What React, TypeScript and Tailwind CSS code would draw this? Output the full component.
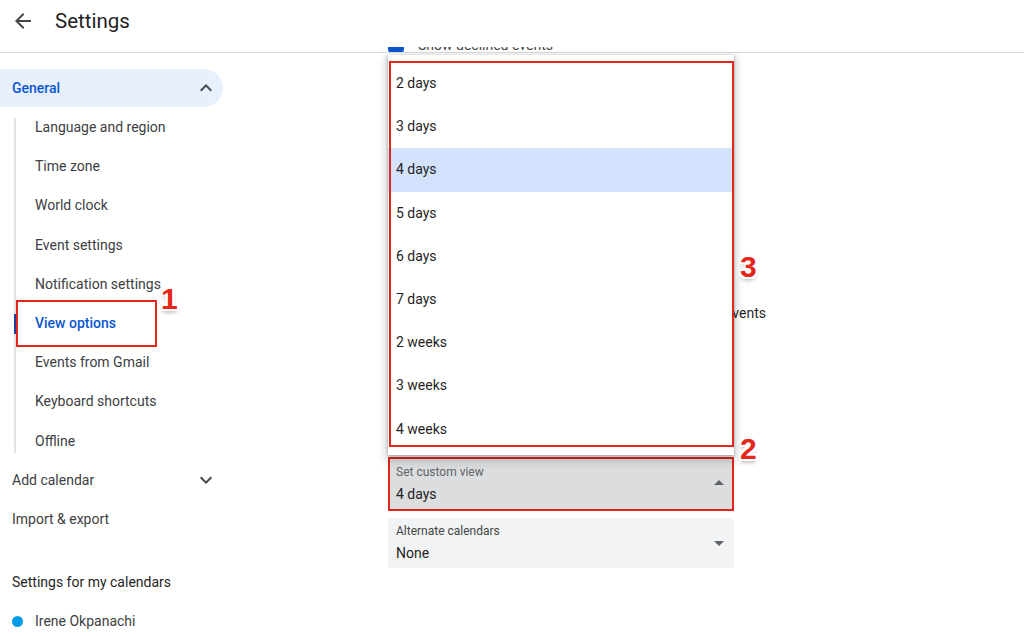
import React from 'react';

const subItems = [
  'Language and region',
  'Time zone',
  'World clock',
  'Event settings',
  'Notification settings',
  'View options',
  'Events from Gmail',
  'Keyboard shortcuts',
  'Offline',
];

const viewChoices = ['2 days', '3 days', '4 days', '5 days', '6 days', '7 days', '2 weeks', '3 weeks', '4 weeks'];

const badge =
  "font-['Liberation_Sans',Arial,sans-serif] text-[30px] font-bold leading-none text-[#e5261b] [text-shadow:-2px_-2px_0_#fff,2px_-2px_0_#fff,-2px_2px_0_#fff,2px_2px_0_#fff,0_3px_4px_rgba(0,0,0,0.35)]";

function Chevron({ up }: { up?: boolean }) {
  return (
    <svg width="24" height="24" viewBox="0 0 24 24" className="fill-[#444746]">
      {up ? (
        <path d="M12 8l-6 6 1.41 1.41L12 10.83l4.59 4.58L18 14z" />
      ) : (
        <path d="M16.59 8.59L12 13.17 7.41 8.59 6 10l6 6 6-6z" />
      )}
    </svg>
  );
}

function Caret({ up }: { up?: boolean }) {
  return (
    <svg width="10" height="5" viewBox="0 0 10 5" className="fill-[#5f6368]">
      {up ? <path d="M0 5l5-5 5 5z" /> : <path d="M0 0l5 5 5-5z" />}
    </svg>
  );
}

function App() {
  return (
    <div className="h-[636px] w-[1024px] overflow-hidden bg-white font-['Roboto',sans-serif] text-[14px] text-[#3c4043]">
      <header className="flex h-[53px] items-center border-b border-[#dadce0] pb-[10px]">
        <svg width="24" height="24" viewBox="0 0 24 24" className="ml-[11px] fill-[#444746]">
          <path d="M20 11H7.83l5.59-5.59L12 4l-8 8 8 8 1.41-1.41L7.83 13H20v-2z" />
        </svg>
        <h1 className="ml-[20px] text-[20.5px] leading-7 text-[#1f1f1f]">Settings</h1>
      </header>

      <div className="flex">
        <aside className="relative w-[240px] shrink-0 pt-4">
          <div className="flex h-[38px] w-[223px] items-center justify-between rounded-r-full bg-[#e8f0fe] pl-3 pr-[5px]">
            <span className="font-medium text-[#0b57d0]">General</span>
            <Chevron up />
          </div>
          <div className="mt-[1px] flex">
            <div className="mb-[8px] ml-[14px] mt-[10px] w-[2px] bg-[#e3e3e3]" />
            <ul className="ml-[19px]">
              {subItems.map((item) => (
                <li
                  key={item}
                  className={
                    'relative flex h-[39.2px] items-center ' +
                    (item === 'View options' ? 'font-medium text-[#0b57d0]' : '')
                  }
                >
                  {item === 'View options' && (
                    <span className="absolute left-[-21px] top-[10px] h-[20px] w-[2px] bg-[#1a3f9c]" />
                  )}
                  {item}
                </li>
              ))}
            </ul>
          </div>
          <div className="flex h-[39.5px] w-[223px] items-center justify-between pl-3 pr-[5px]">
            <span>Add calendar</span>
            <Chevron />
          </div>
          <div className="flex h-[39.5px] items-center pl-3">Import &amp; export</div>
          <div className="mt-[23px] flex h-[39px] items-center pl-3 text-[#1f1f1f]">Settings for my calendars</div>
          <div className="flex h-[39px] items-center pl-3">
            <span className="h-[11px] w-[11px] rounded-full bg-[#039be5]" />
            <span className="ml-[12px]">Irene Okpanachi</span>
          </div>

          <div className="absolute left-[16px] top-[247px] h-[47px] w-[141px] border-2 border-[#e3261c]" />
          <span className={'absolute left-[161px] top-[231px] ' + badge}>1</span>
        </aside>

        <main className="ml-[148px] w-[346px]">
          <div className="relative">
            <div className="-mt-[6px] h-[5px] overflow-hidden">
              <div className="-mt-[12px] flex items-center text-[#444746]">
                <span className="h-[16px] w-[16px] rounded-sm bg-[#0b57d0]" />
                <span className="ml-[14px] leading-5">Show declined events</span>
              </div>
            </div>

            <div className="mt-[251px] h-[20px] w-[378px] whitespace-nowrap text-right leading-5 text-[#1f1f1f]">
              Reduce the brightness of past events
            </div>

            <div className="relative mt-[136px] flex h-[50px] items-center justify-between bg-[#dcdddf] pl-2 pr-[10px]">
              <div className="flex flex-col">
                <span className="text-[12px] leading-4 text-[#5f6368]">Set custom view</span>
                <span className="mt-[4px] leading-5 text-[#1f1f1f]">4 days</span>
              </div>
              <div className="-mt-[4px]">
                <Caret up />
              </div>
              <div className="absolute -top-[2px] left-0 h-[54px] w-[346px] border-2 border-[#e3261c]" />
            </div>

            <div className="mt-[9px] flex h-[50px] items-center justify-between rounded-t bg-[#f1f3f4] pl-2 pr-[10px]">
              <div className="flex flex-col">
                <span className="text-[12px] leading-4 text-[#444746]">Alternate calendars</span>
                <span className="mt-[4px] leading-5 text-[#1f1f1f]">None</span>
              </div>
              <Caret />
            </div>

            <div className="absolute left-0 top-[8px] w-[346px] bg-white pb-[4px] pt-[7px] shadow-[0_1px_3px_rgba(0,0,0,0.3),0_4px_8px_3px_rgba(0,0,0,0.15)]">
              {viewChoices.map((choice) => (
                <div
                  key={choice}
                  className={
                    'flex h-[43.2px] items-center px-2 text-[#1f1f1f] ' +
                    (choice === '4 days' ? 'bg-[#d3e3fd]' : '')
                  }
                >
                  {choice}
                </div>
              ))}
              <div className="absolute left-[1px] top-[6px] h-[386px] w-[345px] border-2 border-[#e3261c]" />
            </div>

            <span className={'absolute left-[352px] top-[205px] ' + badge}>3</span>
            <span className={'absolute left-[352px] top-[387px] ' + badge}>2</span>
          </div>
        </main>
      </div>
    </div>
  );
}

export default App;
